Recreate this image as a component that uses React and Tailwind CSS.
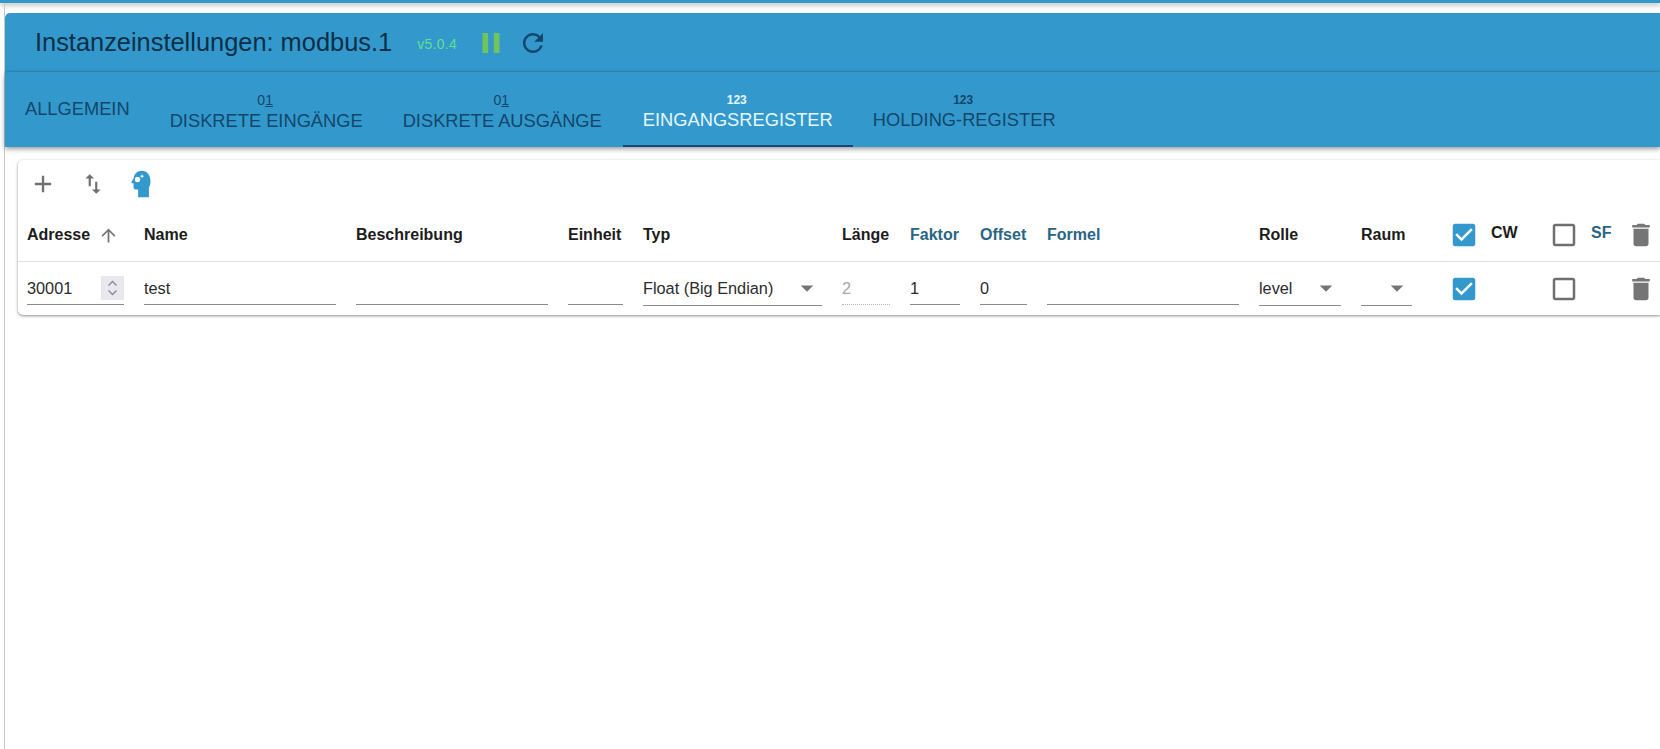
import { MdAdd, MdRefresh, MdDelete, MdPause, MdArrowUpward, MdArrowDropDown, MdCheckBox, MdCheckBoxOutlineBlank } from "react-icons/md";

const tabs = [
  { label: "ALLGEMEIN" },
  { label: "DISKRETE EINGÄNGE", top: "01" },
  { label: "DISKRETE AUSGÄNGE", top: "01", wide: true },
  { label: "EINGANGSREGISTER", top: "123", active: true },
  { label: "HOLDING-REGISTER", top: "123" },
];

const gridCols = "grid grid-cols-[97px_192px_192px_55px_179px_48px_50px_47px_192px_82px_51px_39px_42px_23px_16px_30px] gap-x-5";

function SortIcon() {
  return (
    <svg viewBox="0 0 24 24" className="w-[26px] h-[26px] text-[#6f6f6f]" fill="currentColor">
      <path d="M9 3 5 6.990h3V14h2V6.990h3L9 3zm7 14.010V10h-2v7.010h-3L15 21l4-3.990h-3z" />
    </svg>
  );
}

function ExpertIcon() {
  return (
    <svg viewBox="0 0 20 28" className="w-[20px] h-[28px]">
      <path fill="#3399cc" d="M11 .8C6.500.8 3 3.800 2.700 8.200L.6 11.800c-.4.700-.1 1.400.7 1.500l1.300.2v3.700c0 1.300.9 2.200 2.200 2.200h2.300V27.200h10.800v-9.500c1-1.700 1.600-3.700 1.600-6.100C19.500 5.200 16 .8 11 .8z" />
      <circle cx="6.500" cy="9.500" r="2.700" fill="#fff" />
      <path stroke="#fff" strokeWidth="1" d="M11 4.600v3.200M9.400 6.200h3.200" />
    </svg>
  );
}

function Spinner() {
  return (
    <div className="w-[23px] h-[24px] bg-[#e8e8ee] flex items-center justify-center">
      <svg viewBox="0 0 23 24" className="w-[23px] h-[24px]" fill="none" stroke="#8a8a90" strokeWidth="1.300">
        <path d="M7.500 9.500 11.500 5.500l4 4" />
        <path d="M7.500 14.500l4 4 4-4" />
      </svg>
    </div>
  );
}

function Field({ children, muted }) {
  return (
    <div
      className={`h-[32px] flex items-center text-[16.3px] ${muted ? "text-[#a8a8a8] border-b border-dotted border-[#b5b5b5]" : "text-[#2b2b2b] border-b border-[#8a8a8a]"}`}
    >
      {children}
    </div>
  );
}

function SelectField({ value }) {
  return (
    <div className="h-[35px] flex items-center justify-between border-b border-[#8a8a8a] text-[16.3px] text-[#2b2b2b]">
      <span>{value}</span>
      <MdArrowDropDown className="w-[30px] h-[30px] text-[#757575]" />
    </div>
  );
}

export default function App() {
  const headBase = "text-[16px] font-bold";
  return (
    <div className="w-full h-screen overflow-hidden bg-white flex flex-col font-['Liberation_Sans',Arial,sans-serif]">
      <div className="h-[3px] bg-[#3399cc] shadow-[0_2px_5px_rgba(0,0,0,0.35)]" />
      <div className="flex-1 ml-[4px] border-l border-[#c9c9c9] pt-[10px] flex flex-col">
        <div className="rounded-tl-[5px] bg-[#3399cc]">
          <div className="h-[59px] pl-[30px] flex items-center">
            <h1 className="text-[25.4px] text-[#0c2f48] font-normal leading-none">Instanzeinstellungen: modbus.1</h1>
            <span className="ml-[25px] mt-[4px] text-[14px] tracking-[0.3px] text-[#5fe08f]">v5.0.4</span>
            <MdPause className="ml-[17px] w-[34px] h-[34px] text-[#71c45c]" />
            <MdRefresh className="ml-[10px] w-[30px] h-[30px] text-[#12466b]" />
          </div>
          <div className="h-[75px] flex shadow-[0_-1px_2px_rgba(0,0,0,0.12),0_2px_5px_rgba(0,0,0,0.4)] rounded-tl-[3px]">
            {tabs.map((t) => (
              <div
                key={t.label}
                className={`pl-5 h-full flex flex-col items-center justify-center border-b-2 ${t.wide ? "pr-[21px]" : "pr-5"} ${t.active ? "border-[#14487a] text-[#e6f7ff]" : "border-transparent text-[#12466b]"}`}
              >
                {t.top && (
                  <span className={`leading-none mt-[8px] mb-[2px] -translate-x-[1px] ${t.top === "123" ? "text-[12px] font-bold" : "text-[14px]"}`}>
                    {t.top === "01" ? <>0<span className="underline">1</span></> : t.top}
                  </span>
                )}
                <span className="text-[18.3px] leading-[24px] whitespace-nowrap">{t.label}</span>
              </div>
            ))}
          </div>
        </div>

        <div className="mt-[13px] ml-[13px] h-[155px] rounded-l-[5px] bg-white shadow-[0_1px_3px_rgba(0,0,0,0.45)] flex flex-col">
          <div className="h-[48px] flex items-center pl-[11px]">
            <MdAdd className="w-[28px] h-[28px] text-[#6f6f6f]" />
            <span className="ml-[23px]"><SortIcon /></span>
            <span className="ml-[25px]"><ExpertIcon /></span>
          </div>
          <div className={`${gridCols} h-[54px] items-center pl-[9px] pt-px border-b border-[#e0e0e0] text-[#1c1c1c]`}>
            <div className={`${headBase} flex items-center gap-[8px]`}>
              Adresse
              <MdArrowUpward className="w-[21px] h-[21px] text-[#757575]" />
            </div>
            <div className={headBase}>Name</div>
            <div className={headBase}>Beschreibung</div>
            <div className={headBase}>Einheit</div>
            <div className={headBase}>Typ</div>
            <div className={headBase}>Länge</div>
            <div className={`${headBase} text-[#2a6584]`}>Faktor</div>
            <div className={`${headBase} text-[#2a6584]`}>Offset</div>
            <div className={`${headBase} text-[#2a6584]`}>Formel</div>
            <div className={headBase}>Rolle</div>
            <div className={headBase}>Raum</div>
            <MdCheckBox className="w-[30px] h-[30px] ml-[17px] max-w-none text-[#3399cc]" />
            <div className={`${headBase} -mt-[4px]`}>CW</div>
            <MdCheckBoxOutlineBlank className="w-[30px] h-[30px] -ml-[4px] max-w-none text-[#6f6f6f]" />
            <div className={`${headBase} -mt-[4px] -ml-[5px] text-[#2a6584]`}>SF</div>
            <MdDelete className="w-[30px] h-[30px] -ml-[6px] max-w-none text-[#757575]" />
          </div>
          <div className={`${gridCols} flex-1 items-center pl-[9px]`}>
            <Field><span className="flex-1">30001</span><Spinner /></Field>
            <Field>test</Field>
            <Field />
            <Field />
            <SelectField value="Float (Big Endian)" />
            <Field muted>2</Field>
            <Field>1</Field>
            <Field>0</Field>
            <Field />
            <SelectField value="level" />
            <SelectField value="" />
            <MdCheckBox className="w-[30px] h-[30px] ml-[17px] max-w-none text-[#3399cc]" />
            <div />
            <MdCheckBoxOutlineBlank className="w-[30px] h-[30px] -ml-[4px] max-w-none text-[#6f6f6f]" />
            <div />
            <MdDelete className="w-[30px] h-[30px] -ml-[6px] max-w-none text-[#757575]" />
          </div>
        </div>
      </div>
    </div>
  );
}
